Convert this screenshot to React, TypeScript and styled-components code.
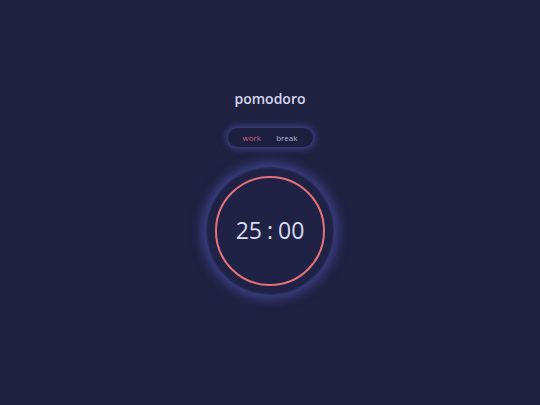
import React, { useState } from "react";
import styled, { createGlobalStyle } from "styled-components";

const Global = createGlobalStyle`
  html, body { margin: 0; padding: 0; background: #1f2140; }
  body { font-family: "Open Sans", "Noto Sans", sans-serif; }
`;

const Page = styled.div`
  width: 540px;
  height: 405px;
  display: flex;
  flex-direction: column;
  align-items: center;
  padding-top: 89px;
  box-sizing: border-box;
  background: #1f2140;
`;

const Title = styled.h1`
  margin: 0;
  font-size: 14px;
  line-height: 20px;
  font-weight: 600;
  color: #d6d7f0;
`;

const Switch = styled.div`
  margin-top: 19px;
  width: 85px;
  height: 19px;
  border-radius: 10px;
  background: #1c1f3e;
  box-shadow: 0 0 6px 2px rgba(90, 95, 200, 0.55);
  display: flex;
  align-items: center;
  justify-content: space-between;
  padding: 0 15px;
  box-sizing: border-box;
`;

const Tab = styled.button<{ $active: boolean }>`
  background: none;
  border: none;
  padding: 0;
  font-family: inherit;
  font-size: 8px;
  font-weight: 500;
  color: ${(p) => (p.$active ? "#cc6480" : "#b6b8d8")};
  cursor: pointer;
`;

const Dial = styled.div`
  margin-top: 20px;
  width: 128px;
  height: 128px;
  border-radius: 50%;
  background: #1f2244;
  box-shadow: 0 0 12px 4px rgba(95, 100, 215, 0.5), inset 0 0 3px rgba(120, 125, 230, 0.35);
  display: flex;
  align-items: center;
  justify-content: center;
`;

const Ring = styled.div`
  width: 110px;
  height: 110px;
  border-radius: 50%;
  border: 2.5px solid #e4727c;
  box-sizing: border-box;
  display: flex;
  align-items: center;
  justify-content: center;
`;

const Time = styled.div`
  font-size: 23px;
  font-weight: 400;
  color: #d9dbf2;
  display: flex;
  align-items: center;
  gap: 5px;
  margin-top: -2px;
`;

export default function App() {
  const [mode, setMode] = useState<"work" | "break">("work");
  return (
    <>
      <Global />
      <Page>
        <Title>pomodoro</Title>
        <Switch>
          <Tab $active={mode === "work"} onClick={() => setMode("work")}>work</Tab>
          <Tab $active={mode === "break"} onClick={() => setMode("break")}>break</Tab>
        </Switch>
        <Dial>
          <Ring>
            <Time>
              <span>25</span>
              <span>:</span>
              <span>00</span>
            </Time>
          </Ring>
        </Dial>
      </Page>
    </>
  );
}
